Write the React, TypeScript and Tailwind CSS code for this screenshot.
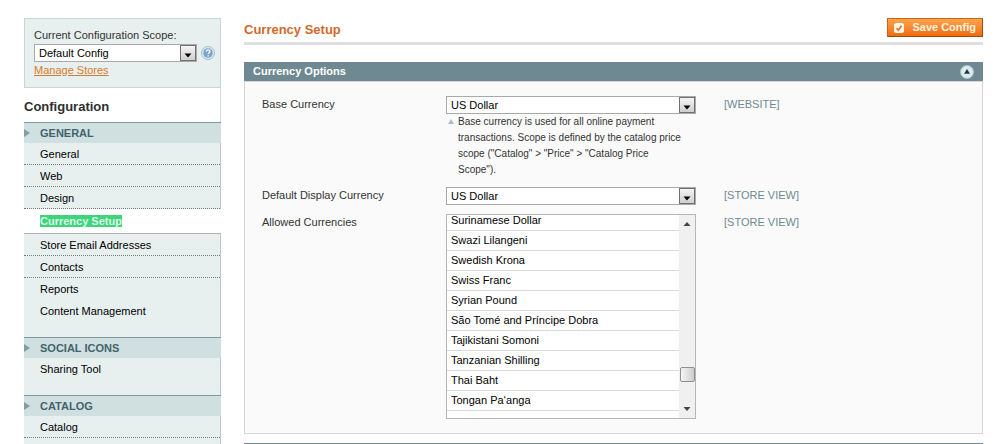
import { useEffect, useRef } from "react";

const currencies = [
  "Surinamese Dollar",
  "Swazi Lilangeni",
  "Swedish Krona",
  "Swiss Franc",
  "Syrian Pound",
  "São Tomé and Príncipe Dobra",
  "Tajikistani Somoni",
  "Tanzanian Shilling",
  "Thai Baht",
  "Tongan Paʻanga",
];

const sections = [
  {
    title: "General",
    items: [
      "General",
      "Web",
      "Design",
      "Currency Setup",
      "Store Email Addresses",
      "Contacts",
      "Reports",
      "Content Management",
    ],
  },
  { title: "Social Icons", items: ["Sharing Tool"] },
  { title: "Catalog", items: ["Catalog"] },
];

const active = "Currency Setup";
const plain = ["Reports", "Content Management", "Sharing Tool"];

function SelectBox({ id, value }: { id: string; value: string }) {
  return (
    <div className="relative min-w-0 flex-1">
      <select
        id={id}
        defaultValue={value}
        className="block h-[18px] w-full appearance-none border border-[#a9a9a9] bg-white pl-1 text-[11px] leading-4 text-black"
      >
        <option>{value}</option>
      </select>
      <span className="pointer-events-none absolute top-px right-px flex h-4 w-4 items-center justify-center border border-[#707070] bg-linear-to-b from-[#f4f4f4] to-[#cfcfcf]">
        <svg width="8" height="5" viewBox="0 0 8 5" className="mt-1" aria-hidden="true">
          <path d="M0.5 0.5h7L4 4.5z" fill="#000" />
        </svg>
      </span>
    </div>
  );
}

function CurrencyList({ id }: { id: string }) {
  const ref = useRef<HTMLSelectElement>(null);

  // start with the first row partly scrolled out
  useEffect(() => {
    if (ref.current) ref.current.scrollTop = 4;
  }, []);

  return (
    <div className="flex h-[205px] border border-[#b5b5b5] bg-white">
      <select
        id={id}
        ref={ref}
        multiple
        size={10}
        className="h-full min-w-0 flex-1 overflow-hidden p-0 text-[11px] text-black outline-none"
      >
        {currencies.map((name) => (
          <option key={name} className="min-h-0 border-b border-[#d9d9d9] px-1 pt-[3px] pb-1">
            {name}
          </option>
        ))}
        <option className="min-h-0 px-1 pt-[3px] pb-1" aria-label="None" />
      </select>
      <div className="flex w-4 flex-col items-center bg-[#f0f0f0]" aria-hidden="true">
        <svg width="16" height="16" viewBox="0 0 16 16">
          <path d="M4.5 11L8 7l3.5 4z" fill="#444" />
        </svg>
        <div className="flex-1" />
        <div className="h-[15px] w-[15px] rounded-xs border border-[#8f8f8f] bg-linear-to-r from-[#f5f5f5] to-[#cdcdcd]" />
        <div className="h-5" />
        <svg width="16" height="16" viewBox="0 0 16 16">
          <path d="M4.5 5L8 9l3.5-4z" fill="#444" />
        </svg>
      </div>
    </div>
  );
}

function Sidebar() {
  return (
    <aside className="flex w-[197px] shrink-0 flex-col">
      <div className="mt-[18px] flex h-[70px] flex-col border border-[#c8d6d6] bg-[#e7efef] px-[9px] pt-2">
        <label htmlFor="scope" className="leading-[17px] text-[#333]">
          Current Configuration Scope:
        </label>
        <div className="flex items-center gap-1">
          <SelectBox id="scope" value="Default Config" />
          <svg width="14" height="14" viewBox="0 0 14 14" className="-mr-1 shrink-0" aria-hidden="true">
            <circle cx="7" cy="7" r="6.5" fill="#dfeaf4" stroke="#a3bbd3" />
            <circle cx="7" cy="7" r="4.8" fill="#7ea3cb" />
            <path
              d="M5.2 5.6c0-2.4 3.7-2.3 3.7-.2 0 1.2-1.7 1.3-1.7 2.6M7.2 9.2v1.3"
              fill="none"
              stroke="#fff"
              strokeWidth="1.3"
            />
          </svg>
        </div>
        <a href="#stores" className="self-start leading-4 text-[#d97b2b] underline">
          Manage Stores
        </a>
      </div>
      <nav className="flex flex-1 flex-col border-r border-[#d5dcdc]">
        <h3 className="h-[34px] pt-[9px] text-[13px] leading-5 font-bold text-[#2f2f2f]">Configuration</h3>
        {sections.map((section) => (
          <section key={section.title} className="-mr-px flex flex-col last:flex-1">
            <h4 className="flex h-[21px] items-center border-t border-[#7f9a9e] bg-[#d0dfe0] font-bold text-[#42646d] uppercase">
              <svg width="6" height="8" viewBox="0 0 6 8" className="mr-2.5 shrink-0" aria-hidden="true">
                <path d="M0 0l6 4-6 4z" fill="#7f9fa3" />
              </svg>
              {section.title}
            </h4>
            <ul
              className={
                section.title === "Catalog"
                  ? "flex-1 border-r border-[#b9c9c9] bg-[#e7efef]"
                  : "border-r border-[#b9c9c9] bg-[#e7efef] pb-[15px]"
              }
            >
              {section.items.map((item) =>
                item === active ? (
                  <li
                    key={item}
                    className="-mr-px h-[25px] border-b border-[#a9b5b6] bg-white pl-4 leading-6"
                  >
                    <a href="#currency" className="bg-[#3fd47c] font-bold text-[#d9fbe6]">
                      {item}
                    </a>
                  </li>
                ) : (
                  <li
                    key={item}
                    className={
                      plain.includes(item)
                        ? "h-[22px] pl-4 leading-[22px]"
                        : "h-[22px] border-b border-dotted border-[#6f7f80] pl-4 leading-[22px]"
                    }
                  >
                    <a href="#section" className="text-black">
                      {item}
                    </a>
                  </li>
                ),
              )}
            </ul>
          </section>
        ))}
      </nav>
    </aside>
  );
}

export default function App() {
  return (
    <div className="flex min-h-screen gap-[23px] bg-white pr-[18px] pl-6 font-['Liberation_Sans',Arial,sans-serif] text-[11px] text-[#333]">
      <Sidebar />
      <main className="min-w-0 flex-1 pt-[18px]">
        <div className="flex h-[27px] items-start justify-between border-b-[3px] border-[#dfdfdf]">
          <h1 className="text-[13px] leading-6 font-bold text-[#d2692b]">Currency Setup</h1>
          <button
            type="button"
            className="flex h-[19px] items-center gap-2 border border-[#c8641c] border-r-[#a04909] border-b-[#a04909] bg-linear-to-b from-[#ffa44a] to-[#ee6c0a] px-1.5 font-bold text-[#fff3e0]"
          >
            <svg width="10" height="10" viewBox="0 0 10 10" aria-hidden="true">
              <rect width="10" height="10" rx="2.5" fill="#fff6ea" />
              <path d="M2.5 5.2l1.8 2L7.6 2.8" fill="none" stroke="#e0702a" strokeWidth="1.6" />
            </svg>
            Save Config
          </button>
        </div>

        <section className="mt-[17px]">
          <div className="flex h-[19px] items-center justify-between bg-[#6f8992] px-[9px]">
            <h2 className="font-bold text-white">Currency Options</h2>
            <svg width="14" height="14" viewBox="0 0 14 14" aria-hidden="true">
              <circle cx="7" cy="7" r="6.5" fill="#dcebf0" stroke="#a9c0c8" />
              <path d="M4 8.8L7 4l3 4.8z" fill="#173a47" />
            </svg>
          </div>
          <div className="grid grid-cols-[184px_250px_1fr] gap-y-[9px] border border-[#d6d6d6] bg-[#fafafa] pt-3.5 pb-3.5 pl-[17px]">
            <label htmlFor="base" className="leading-4">
              Base Currency
            </label>
            <div>
              <div className="flex">
                <SelectBox id="base" value="US Dollar" />
              </div>
              <p className="flex pr-2 text-[10px] leading-4">
                <svg width="6" height="5" viewBox="0 0 6 5" className="mt-[5px] mr-1 ml-0.5 shrink-0" aria-hidden="true">
                  <path d="M0 5l3-5 3 5z" fill="#a9bcc2" />
                </svg>
                <span>
                  Base currency is used for all online payment transactions. Scope is defined by the catalog
                  price scope ("Catalog" &gt; "Price" &gt; "Catalog Price Scope").
                </span>
              </p>
            </div>
            <span className="pl-7 leading-4 text-[#6f8992]">[WEBSITE]</span>

            <label htmlFor="display" className="leading-4">
              Default Display Currency
            </label>
            <div className="flex">
              <SelectBox id="display" value="US Dollar" />
            </div>
            <span className="pl-7 leading-4 text-[#6f8992]">[STORE VIEW]</span>

            <label htmlFor="allowed" className="leading-4">
              Allowed Currencies
            </label>
            <CurrencyList id="allowed" />
            <span className="pl-7 leading-4 text-[#6f8992]">[STORE VIEW]</span>
          </div>
        </section>
        <div className="mt-[9px] h-px bg-[#6f8992]" />
      </main>
    </div>
  );
}
